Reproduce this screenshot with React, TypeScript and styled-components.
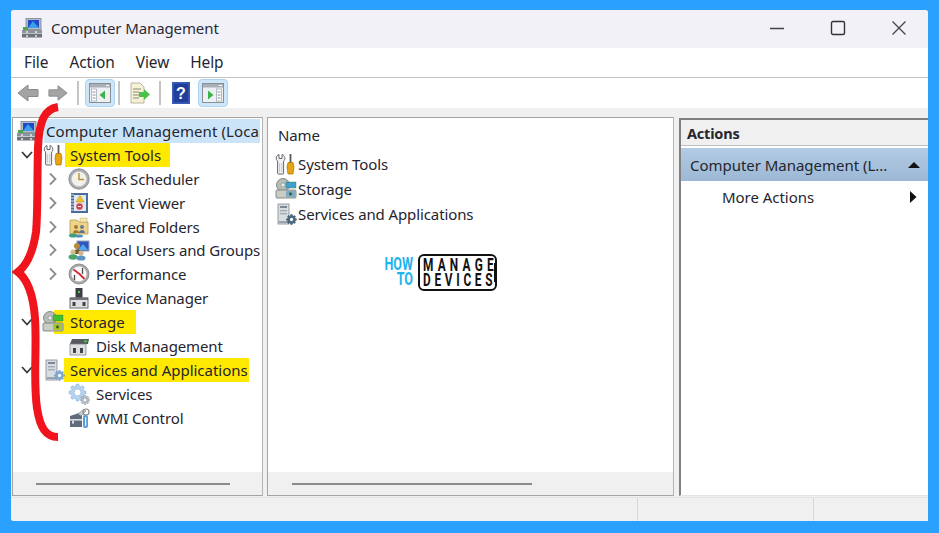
import React from "react";
import styled, { createGlobalStyle } from "styled-components";

const Global = createGlobalStyle`
  html, body { margin: 0; padding: 0; background: #2aa1ff; }
  body { width: 939px; height: 533px; overflow: hidden; font-family: "Noto Sans", "Open Sans", sans-serif; font-size: 15px; color: #25252f; }
`;
const Page = styled.div`
  position: relative; width: 939px; height: 533px; padding: 10px 11px 12px 11px; box-sizing: border-box; background: #2aa1ff;
`;
const Win = styled.div`
  width: 917px; height: 511px; display: flex; flex-direction: column; background: #f0f0f0; border-radius: 3px 3px 0 3px; overflow: hidden;
`;
const TitleBar = styled.div`
  height: 38px; flex: none; box-sizing: border-box; display: flex; align-items: center; background: #f3f1f8; padding: 0 21px 2px 10px;
`;
const TitleText = styled.div`
  margin-left: 8px; flex: 1; font-size: 15px; letter-spacing: -0.1px; color: #2b2b33;
`;
const WinControls = styled.div`
  display: flex; align-items: center; gap: 45px;
`;
const MenuBar = styled.div`
  height: 30px; flex: none; display: flex; align-items: center; background: #fff; padding: 0 0 1px 13px; gap: 21px; border-bottom: 1px solid #c6c6c6; box-sizing: border-box;
`;
const MenuItem = styled.div`
  font-size: 15.4px; letter-spacing: -0.05px;
`;
const ToolBar = styled.div`
  height: 30px; flex: none; display: flex; align-items: center; background: #fff; padding-left: 6px;
`;
const ToolSep = styled.div<{ $m: number }>`
  width: 2px; height: 24px; background: #c4c4c4; margin-left: ${p => p.$m}px;
`;
const ToolBtn = styled.div<{ $active?: boolean; $ml: number; $w: number }>`
  width: ${p => p.$w}px; height: 28px; box-sizing: border-box; display: flex; align-items: center; justify-content: center; margin-left: ${p => p.$ml}px;
  background: ${p => (p.$active ? "#cde6fa" : "transparent")};
  border: 1px solid ${p => (p.$active ? "#aad4f5" : "transparent")};
  border-radius: 4px;
`;
const Main = styled.div`
  flex: 1; display: flex; min-height: 0; padding: 9px 0 1px 1px; background: #f0f0f0;
`;
const Pane = styled.div<{ $w: number; $ml: number }>`
  width: ${p => p.$w}px; margin-left: ${p => p.$ml}px; flex: none; box-sizing: border-box; display: flex; flex-direction: column;
  background: #fff; border: 1px solid #a4a4a4; border-right-color: #b4b4b4; overflow: hidden;
`;
const Tree = styled.div`
  flex: 1; padding-top: 1px; min-height: 0;
`;
const Row = styled.div<{ $pad: number }>`
  position: relative; height: 23.9px; display: flex; align-items: center; padding-left: ${p => p.$pad}px; white-space: nowrap;
`;
const Caret = styled.div`
  width: 16px; height: 24px; flex: none; display: flex; align-items: center; justify-content: center;
`;
const IconBox = styled.div<{ $ml: number }>`
  position: relative; z-index: 1; width: 22px; height: 22px; flex: none; margin-left: ${p => p.$ml}px;
`;
const Label = styled.div<{ $ml: number }>`
  margin-left: ${p => p.$ml}px; letter-spacing: -0.11px; line-height: 24px;
`;
const SelLabel = styled(Label)`
  flex: 1; height: 24px; background: #cce4f7; padding-left: 2px; overflow: hidden; margin-right: 2px; letter-spacing: 0.1px;
`;
const Mark = styled(Label)<{ $pl: number; $pr: number }>`
  background: #ffe900; height: 24px; padding-left: ${p => p.$pl}px; padding-right: ${p => p.$pr}px; letter-spacing: -0.02px;
`;
const HScroll = styled.div<{ $l: number; $w: number }>`
  height: 23px; flex: none; background: #f0f0f0; display: flex; align-items: center; padding-left: ${p => p.$l}px;
  &::after { content: ""; display: block; width: ${p => p.$w}px; height: 2px; background: #8a8a8a; }
`;
const ListHead = styled.div`
  height: 33px; flex: none; display: flex; align-items: center; padding-left: 10px; letter-spacing: -0.1px;
`;
const List = styled.div`
  flex: 1; padding-top: 0;
`;
const ListRow = styled.div`
  height: 25px; display: flex; align-items: center; padding-left: 7px;
`;
const ActionsPane = styled.div`
  width: 249px; margin: 1px 0 0 5px; flex: none; box-sizing: border-box; display: flex; flex-direction: column; background: #fff;
  border-left: 2px solid #808080; border-top: 2px solid #808080; border-bottom: 1px solid #e4e4e4;
`;
const ActionsHead = styled.div`
  height: 26px; flex: none; display: flex; align-items: center; padding-left: 6px; background: #f0f0f0; font-weight: 700; font-size: 14.5px; letter-spacing: -0.2px; border-bottom: 1px solid #c0c0c0; box-sizing: border-box;
`;
const ActionsGroup = styled.div`
  height: 33px; margin-top: 2px; flex: none; display: flex; align-items: center; padding: 0 8px 0 9px; letter-spacing: -0.03px;
  background: linear-gradient(#b3cbe3, #9cb8d5); justify-content: space-between;
`;
const ActionsItem = styled.div`
  height: 32px; flex: none; display: flex; align-items: center; padding: 0 9px 0 41px; letter-spacing: -0.04px; justify-content: space-between;
`;
const Status = styled.div`
  height: 24px; flex: none; display: flex; background: #f0f0f0; border-top: 1px solid #e2e2e2; box-sizing: border-box;
`;
const StatusCell = styled.div<{ $w: number }>`
  width: ${p => p.$w}px; border-right: 1px solid #d8d8d8; box-sizing: border-box; flex: none;
`;
const Logo = styled.div`
  position: absolute; left: 385px; top: 254px; display: flex; gap: 5px; align-items: stretch; font-family: "Roboto", sans-serif;
`;
const HowTo = styled.div`
  width: 28px; display: flex; flex-direction: column; align-items: flex-end; color: #1db4ec; font-weight: 700; font-size: 18.5px; line-height: 15px; padding-top: 3px;
`;
const HowWord = styled.span`
  display: block; white-space: nowrap; transform: scaleX(0.68); transform-origin: right center;
`;
const LogoBox = styled.div`
  position: relative; width: 79px; height: 37px; box-sizing: border-box; border: 2px solid #111; border-radius: 6px; display: flex; flex-direction: column; align-items: flex-start; padding: 2px 0 0 3px;
  color: #111; font-size: 18.5px; font-weight: 700; line-height: 15px;
  &::after { content: ""; position: absolute; right: -2px; top: 7px; width: 3px; height: 19px; background: #111; }
`;
const LogoLine = styled.div<{ $s: number }>`
  letter-spacing: ${p => p.$s}px; white-space: nowrap; transform: scaleX(0.64); transform-origin: left center;
`;
const BraceSvg = styled.svg`
  position: absolute; left: 0; top: 0; pointer-events: none; z-index: 5;
`;

const Glyph = styled.svg`
  display: block;
`;

const Down = () => (
  <Glyph width="14" height="10" viewBox="0 0 14 10"><path d="M2 2 L7 7.5 L12 2" fill="none" stroke="#3a3a3a" strokeWidth="1.8" /></Glyph>
);
const Right = () => (
  <Glyph width="10" height="14" viewBox="0 0 10 14"><path d="M2 1.5 L7.5 7 L2 12.5" fill="none" stroke="#8c8c8c" strokeWidth="1.8" /></Glyph>
);

const I = ({ children }: { children: React.ReactNode }) => (
  <Glyph width="22" height="22" viewBox="0 0 22 22">{children}</Glyph>
);

const ComputerIcon = () => (
  <I>
    <rect x="5" y="1.5" width="15" height="11" fill="#b4bcc6" stroke="#7c8490" strokeWidth=".8" />
    <rect x="7" y="3" width="11" height="8" fill="#1f49c8" />
    <path d="M7 11 L12 4 L18 11Z" fill="#3aa0e8" />
    <rect x="1" y="13" width="20" height="3.5" fill="#8d939b" />
    <rect x="1" y="17" width="20" height="3.5" fill="#6d737b" />
    <rect x="2" y="10" width="5" height="3" fill="#4da54d" />
    <circle cx="6" cy="15" r="1" fill="#e8e8e8" /><circle cx="15" cy="15" r="1" fill="#e8e8e8" />
    <circle cx="6" cy="19" r="1" fill="#e8e8e8" /><circle cx="15" cy="19" r="1" fill="#e8e8e8" />
  </I>
);
const ToolsIcon = () => (
  <I>
    <path d="M4 1.5 L4 5.5 L7 5.5 L7 1.5 C10.5 2.5 10.5 7 8.6 8 L8.6 20 Q8.6 21 7.6 21 L3.6 21 Q2.6 21 2.6 20 L2.6 8 C.6 7 .6 2.5 4 1.5Z" fill="#f1f2f4" stroke="#63676d" strokeWidth="1" />
    <path d="M4.6 10 V19 M6.8 10 V19" stroke="#b9bdc2" strokeWidth=".8" />
    <rect x="14.6" y="1" width="1.8" height="9" fill="#55585e" />
    <path d="M13 9.5 H18 L19 14 L18 21 H13 L12 14Z" fill="#e8a412" stroke="#a87208" strokeWidth=".7" />
  </I>
);
const ClockIcon = () => (
  <I>
    <circle cx="11" cy="11" r="10.2" fill="#a9adb2" stroke="#7f8389" strokeWidth=".8" />
    <circle cx="11" cy="11" r="7.6" fill="#f4f2e8" stroke="#c5c7c9" strokeWidth=".6" />
    <path d="M11 5 V11.5 H16" fill="none" stroke="#b6903a" strokeWidth="1.4" />
  </I>
);
const EventIcon = () => (
  <I>
    <rect x="3" y="1" width="17" height="20" fill="#4a6d9c" />
    <rect x="6" y="3" width="12" height="16" fill="#dfe7f0" />
    <path d="M3 3h3M3 6h3M3 9h3M3 12h3M3 15h3M3 18h3" stroke="#d9dee6" strokeWidth="1" />
    <path d="M12 3.5 L16 10 H8Z" fill="#f0c420" stroke="#b88a08" strokeWidth=".5" />
    <circle cx="11.5" cy="14.5" r="3.2" fill="#d63f4a" />
    <path d="M10 14.5h3" stroke="#fff" strokeWidth="1" />
  </I>
);
const FolderIcon = () => (
  <I>
    <path d="M2 4 H9 L11 6 H20 V18 H2Z" fill="#edd48a" stroke="#b79a4c" strokeWidth=".8" />
    <path d="M12 2 H19 V6 H12Z" fill="#f6e6b4" stroke="#c6aa60" strokeWidth=".5" />
    <circle cx="8" cy="11" r="2" fill="#a87830" /><circle cx="14" cy="11" r="2" fill="#6a7a8a" />
    <path d="M5 17 C5 13 11 13 11 17Z" fill="#a07c3a" /><path d="M11 17 C11 13 17 13 17 17Z" fill="#5d7690" />
    <ellipse cx="5" cy="19.5" rx="4" ry="2" fill="#3aa27a" /><ellipse cx="11" cy="20" rx="4" ry="1.6" fill="#4f8ec0" />
  </I>
);
const UsersIcon = () => (
  <I>
    <rect x="9" y="2" width="12" height="10" fill="#2e55c0" stroke="#9aa5b2" strokeWidth="1" />
    <path d="M10 11 L15 5 L20 11Z" fill="#52a8e8" />
    <circle cx="9" cy="7" r="3" fill="#b68a3c" />
    <path d="M4 15 C4 9 14 9 14 15Z" fill="#7a5c28" />
    <circle cx="5" cy="13" r="2.6" fill="#d0c090" />
    <ellipse cx="5" cy="18" rx="4.5" ry="2.8" fill="#4ca46a" />
    <circle cx="13" cy="14" r="2.6" fill="#d2b68a" />
    <ellipse cx="13" cy="19" rx="4.5" ry="2.6" fill="#5d94c6" />
  </I>
);
const PerfIcon = () => (
  <I>
    <circle cx="11" cy="11" r="10" fill="#aaa" stroke="#7d7d7d" strokeWidth=".8" />
    <circle cx="11" cy="11" r="7.6" fill="#fbfbfb" />
    <path d="M5.5 6.5 L11.5 11 L16.5 16" stroke="#d6262c" strokeWidth="1.8" fill="none" />
    <path d="M14.5 5 V11 M6.5 12 V17" stroke="#4b4b4b" strokeWidth="1.3" />
  </I>
);
const DeviceIcon = () => (
  <I>
    <rect x="7.5" y="1" width="7" height="10" fill="#3b3f44" />
    <rect x="10" y="4" width="2" height="2" fill="#52c452" />
    <rect x="2" y="11" width="18" height="10" fill="#e0e0e0" stroke="#6e6e6e" strokeWidth="1" />
    <rect x="4.5" y="15" width="3" height="4" fill="#40444a" /><rect x="14.5" y="15" width="3" height="4" fill="#40444a" />
    <rect x="2" y="10.5" width="18" height="2.5" fill="#6e7278" />
  </I>
);
const StorageIcon = ({ c = "#3fc02c" }: { c?: string }) => (
  <I>
    <circle cx="8" cy="7" r="6.5" fill="#b6bdb8" stroke="#6f7672" strokeWidth=".8" />
    <circle cx="8" cy="7" r="2" fill="#ecefec" stroke="#777" strokeWidth=".5" />
    <rect x="1" y="12" width="20" height="8" rx="1" fill="#c9cdc4" stroke="#6f7672" strokeWidth=".8" />
    <rect x="11" y="4" width="10" height="6" fill={c} stroke="#3c7a3a" strokeWidth=".4" />
    <rect x="11" y="13" width="9" height="6" fill={c === "#3fc02c" ? "#a8c62c" : "#7eaac4"} />
    <circle cx="15.5" cy="16" r="1.4" fill="#315a2a" />
  </I>
);
const DiskIcon = () => (
  <I>
    <path d="M4 4 H21 L20 9 H2Z" fill="#565a60" />
    <rect x="16" y="5.5" width="3" height="1.6" fill="#4bd04b" />
    <rect x="2" y="9" width="16" height="11" fill="#dedfe0" stroke="#7a7a7a" strokeWidth=".7" />
    <rect x="5" y="13" width="3" height="5" fill="#3f434a" /><rect x="12" y="13" width="3" height="5" fill="#3f434a" />
  </I>
);
const gearPath = (cx: number, cy: number, r: number) => {
  const n = 8;
  const pts: string[] = [];
  for (let i = 0; i < n; i++) {
    const a = (i / n) * Math.PI * 2;
    const w = Math.PI / n / 2;
    [[r * 0.76, a - w * 1.5], [r, a - w * 0.7], [r, a + w * 0.7], [r * 0.76, a + w * 1.5]].forEach(([rad, t]) => {
      pts.push(`${(cx + rad * Math.cos(t)).toFixed(2)} ${(cy + rad * Math.sin(t)).toFixed(2)}`);
    });
  }
  const h = r * 0.4;
  return `M${pts.join(" L")}Z M${cx - h} ${cy} a${h} ${h} 0 1 0 ${2 * h} 0 a${h} ${h} 0 1 0 ${-2 * h} 0Z`;
};
const Gear = ({ cx, cy, r, c, s }: { cx: number; cy: number; r: number; c: string; s: string }) => (
  <path d={gearPath(cx, cy, r)} fill={c} fillRule="evenodd" stroke={s} strokeWidth=".5" />
);
const ServicesAppIcon = ({ dark }: { dark?: boolean }) => (
  <I>
    <rect x="3" y="1" width="11" height="20" fill="#d8dde2" stroke="#7f8a96" strokeWidth=".8" />
    <rect x="5" y="3" width="7" height="2" fill="#7d8894" />
    <rect x="5" y="7" width="7" height="1.4" fill="#a2acb6" />
    <rect x="5" y="10" width="7" height="1.4" fill="#a2acb6" />
    <rect x="4" y="18" width="9" height="2" fill="#9aa4ae" />
    <Gear cx={16.5} cy={16.5} r={5} c={dark ? "#4b6880" : "#82aad6"} s={dark ? "#33485a" : "#5f8ab8"} />
  </I>
);
const GearsIcon = () => (
  <I>
    <Gear cx={9.5} cy={9.5} r={8.5} c="#b5d2ee" s="#7ea6d0" />
    <Gear cx={17} cy={17} r={4.6} c="#b8c2cc" s="#808c98" />
  </I>
);
const WmiIcon = () => (
  <I>
    <path d="M2 9 L14 5 L14 20 H2Z" fill="#5f6d7c" />
    <rect x="2" y="12" width="12" height="1.6" fill="#d9dee2" />
    <rect x="4" y="13.6" width="2" height="3" fill="#d9dee2" />
    <path d="M10 7 L16 2 L18 4 L13 9Z" fill="#c8ccd2" stroke="#6d737b" strokeWidth=".5" />
    <circle cx="18" cy="5" r="3" fill="none" stroke="#888" strokeWidth="1.2" />
    <rect x="15" y="8" width="5" height="13" rx="2" fill="#5c9cd8" />
    <rect x="17" y="10" width="1.2" height="9" fill="#e6f0fa" />
  </I>
);

const paneGlyph = (active: "left" | "right") => (
  <Glyph width="22" height="20" viewBox="0 0 22 20">
    <rect x=".5" y=".5" width="21" height="19" fill="#eef1f4" stroke="#8a8f96" />
    <rect x="1" y="1" width="20" height="3.5" fill="#aab0b8" />
    <path d="M17 2.5h3" stroke="#fff" strokeWidth="1" />
    {active === "left" ? (
      <>
        <rect x="2.5" y="6" width="5" height="12" fill="#fff" stroke="#9aa0a8" strokeWidth=".7" />
        <path d="M3.5 9h3M3.5 12h3M3.5 15h3" stroke="#8a8f96" />
        <path d="M16 7.5 V16.5 L10.5 12Z" fill="#3bb24a" />
      </>
    ) : (
      <>
        <rect x="14.5" y="6" width="5" height="12" fill="#fff" stroke="#9aa0a8" strokeWidth=".7" />
        <path d="M15.5 9h3M15.5 12h3M15.5 15h3" stroke="#8a8f96" />
        <path d="M6 7.5 V16.5 L11.5 12Z" fill="#3bb24a" />
      </>
    )}
  </Glyph>
);

const NavArrow = ({ flip }: { flip?: boolean }) => (
  <Glyph width="22" height="18" viewBox="0 0 22 18">
    <path
      d={flip ? "M1 5.5 H11 V1 L21 9 L11 17 V12.5 H1Z" : "M21 5.5 H11 V1 L1 9 L11 17 V12.5 H21Z"}
      fill="#a4a4a4" stroke="#8a8a8a" strokeWidth="1" strokeLinejoin="round"
    />
  </Glyph>
);

const Tri = ({ up }: { up?: boolean }) => (
  <Glyph width="12" height="12" viewBox="0 0 12 12">
    <path d={up ? "M0 9 L6 3 L12 9Z" : "M3 0 L9.5 6 L3 12Z"} fill="#111" />
  </Glyph>
);

const Sub = ({ icon, label, arrow }: { icon: React.ReactNode; label: string; arrow?: boolean }) => (
  <Row $pad={32}>
    <Caret>{arrow && <Right />}</Caret>
    <IconBox $ml={7}>{icon}</IconBox>
    <Label $ml={6}>{label}</Label>
  </Row>
);

export default function App() {
  return (
    <Page>
      <Global />
      <Win>
        <TitleBar>
          <ComputerIcon />
          <TitleText>Computer Management</TitleText>
          <WinControls>
            <Glyph width="16" height="16" viewBox="0 0 16 16"><path d="M1 8.5 H15" stroke="#444" strokeWidth="1.4" /></Glyph>
            <Glyph width="16" height="16" viewBox="0 0 16 16"><rect x="1.5" y="1.5" width="13" height="13" rx="1.5" fill="none" stroke="#333" strokeWidth="1.4" /></Glyph>
            <Glyph width="16" height="16" viewBox="0 0 16 16"><path d="M1.5 1.5 L14.5 14.5 M14.5 1.5 L1.5 14.5" stroke="#444" strokeWidth="1.3" /></Glyph>
          </WinControls>
        </TitleBar>
        <MenuBar>
          <MenuItem>File</MenuItem>
          <MenuItem>Action</MenuItem>
          <MenuItem>View</MenuItem>
          <MenuItem>Help</MenuItem>
        </MenuBar>
        <ToolBar>
          <NavArrow />
          <ToolBtn $w={22} $ml={8}><NavArrow flip /></ToolBtn>
          <ToolSep $m={8} />
          <ToolBtn $active $w={30} $ml={6}>{paneGlyph("left")}</ToolBtn>
          <ToolSep $m={3} />
          <ToolBtn $w={24} $ml={8}>
            <Glyph width="22" height="22" viewBox="0 0 22 22">
              <path d="M2 1 H11 L15 5 V21 H2Z" fill="#f6f2d8" stroke="#a8a48c" strokeWidth=".8" />
              <path d="M4 7h8M4 10h6M4 13h6M4 16h6" stroke="#8c8a78" strokeWidth="1" />
              <path d="M10 10 H15 V7 L21 12.5 L15 18 V15 H10Z" fill="#4cc04a" />
            </Glyph>
          </ToolBtn>
          <ToolSep $m={7} />
          <ToolBtn $w={20} $ml={10}>
            <Glyph width="18" height="22" viewBox="0 0 18 22">
              <rect width="18" height="22" fill="#2b4fa8" />
              <rect x="1" y="1" width="16" height="20" fill="#1f3f9a" stroke="#5f82d0" strokeWidth=".6" />
              <text x="9" y="17" textAnchor="middle" fontFamily="Liberation Sans" fontWeight="700" fontSize="16" fill="#fff">?</text>
            </Glyph>
          </ToolBtn>
          <ToolBtn $active $w={30} $ml={7}>{paneGlyph("right")}</ToolBtn>
        </ToolBar>
        <Main>
          <Pane $w={251} $ml={0}>
            <Tree>
              <Row $pad={3}>
                <IconBox $ml={0}><ComputerIcon /></IconBox>
                <SelLabel $ml={6}>Computer Management (Local)</SelLabel>
              </Row>
              <Row $pad={6}>
                <Caret><Down /></Caret>
                <IconBox $ml={8}><ToolsIcon /></IconBox>
                <Mark $ml={0} $pl={5} $pr={9}>System Tools</Mark>
              </Row>
              <Sub icon={<ClockIcon />} label="Task Scheduler" arrow />
              <Sub icon={<EventIcon />} label="Event Viewer" arrow />
              <Sub icon={<FolderIcon />} label="Shared Folders" arrow />
              <Sub icon={<UsersIcon />} label="Local Users and Groups" arrow />
              <Sub icon={<PerfIcon />} label="Performance" arrow />
              <Sub icon={<DeviceIcon />} label="Device Manager" />
              <Row $pad={6}>
                <Caret><Down /></Caret>
                <IconBox $ml={7}><StorageIcon /></IconBox>
                <Mark $ml={-10} $pl={16} $pr={11}>Storage</Mark>
              </Row>
              <Sub icon={<DiskIcon />} label="Disk Management" />
              <Row $pad={6}>
                <Caret><Down /></Caret>
                <IconBox $ml={8}><ServicesAppIcon /></IconBox>
                <Mark $ml={-1} $pl={6} $pr={1}>Services and Applications</Mark>
              </Row>
              <Sub icon={<GearsIcon />} label="Services" />
              <Sub icon={<WmiIcon />} label="WMI Control" />
            </Tree>
            <HScroll $l={23} $w={194} />
          </Pane>
          <Pane $w={407} $ml={4}>
            <ListHead>Name</ListHead>
            <List>
              <ListRow><ToolsIcon /><Label $ml={1}>System Tools</Label></ListRow>
              <ListRow><StorageIcon c="#3f9fd0" /><Label $ml={1}>Storage</Label></ListRow>
              <ListRow><ServicesAppIcon dark /><Label $ml={1}>Services and Applications</Label></ListRow>
            </List>
            <HScroll $l={24} $w={240} />
          </Pane>
          <ActionsPane>
            <ActionsHead>Actions</ActionsHead>
            <ActionsGroup>Computer Management (L...<Tri up /></ActionsGroup>
            <ActionsItem>More Actions<Tri /></ActionsItem>
          </ActionsPane>
        </Main>
        <Status>
          <StatusCell $w={627} />
          <StatusCell $w={176} />
        </Status>
      </Win>
      <Logo>
        <HowTo><HowWord>HOW</HowWord><HowWord>TO</HowWord></HowTo>
        <LogoBox>
          <LogoLine $s={6.6}>MANAGE</LogoLine>
          <LogoLine $s={5.8}>DEVICES</LogoLine>
        </LogoBox>
      </Logo>
      <BraceSvg width="939" height="533" viewBox="0 0 939 533">
        <path
          d="M58 107 C44 109 39 122 38 148 C37 180 38 212 36 232 C33 252 27 265 18 272 C27 279 33 292 35 318 C37 350 33 380 37 408 C40 428 46 437 58 437"
          fill="none" stroke="#f0141c" strokeWidth="8" strokeLinejoin="miter" strokeMiterlimit="6"
        />
      </BraceSvg>
    </Page>
  );
}
